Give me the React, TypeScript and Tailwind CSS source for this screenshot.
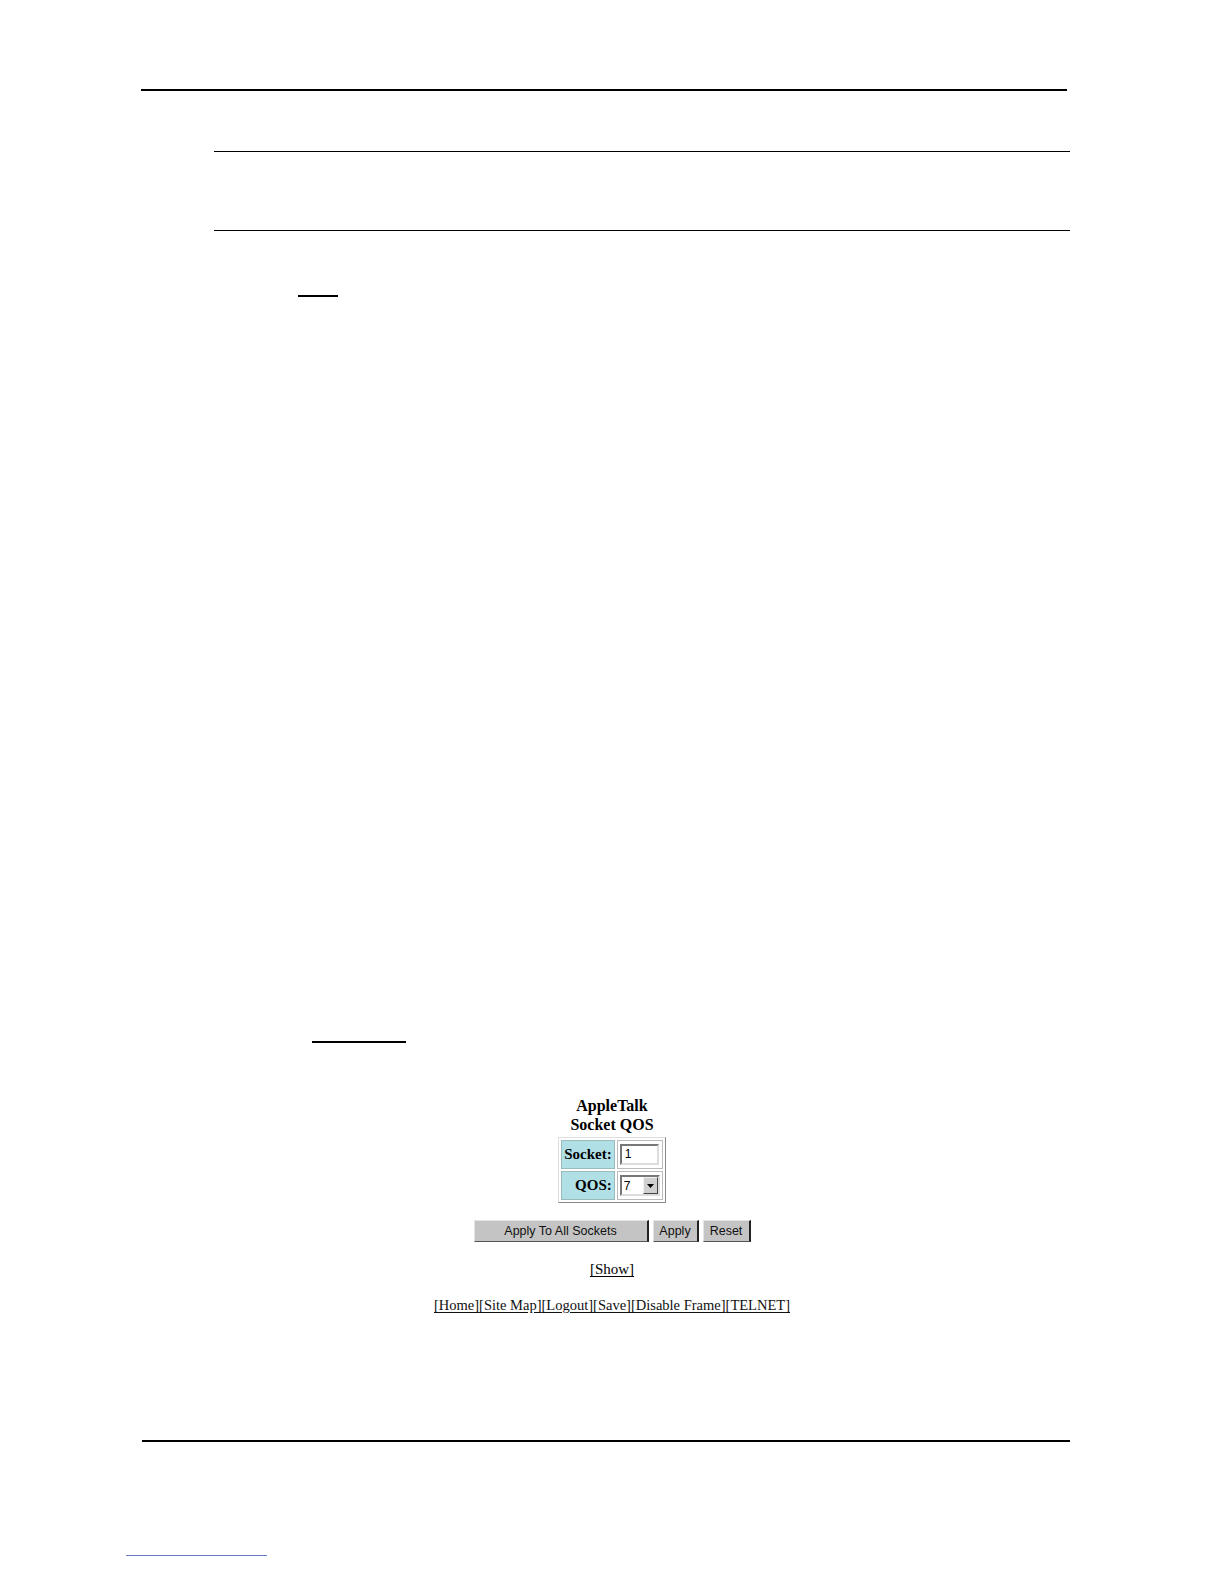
import React from 'react';

const serif = { fontFamily: '"Liberation Serif", "Times New Roman", serif' };

const Rule: React.FC<{ className: string }> = ({ className }) => <div className={className} />;

const FormButton: React.FC<{ label: string; className?: string }> = ({ label, className = '' }) => (
    <button
        type="button"
        className={`h-[22px] bg-[#c4c4c4] border-t border-l border-t-[#e4e4e4] border-l-[#e4e4e4] border-r-2 border-b border-r-[#222] border-b-[#555] text-[12.5px] text-[#111] leading-none ${className}`}
        style={{ fontFamily: '"Liberation Sans", Arial, sans-serif' }}
    >
        {label}
    </button>
);

const SocketQosForm: React.FC = () => (
    <div className="flex flex-col items-center" style={serif}>
        <div className="text-center font-bold text-[16px] leading-[19px] text-black">
            <div>AppleTalk</div>
            <div>Socket QOS</div>
        </div>
        <table className="mt-[3px] border-separate border-spacing-[2px] border border-t-[#ddd] border-l-[#ddd] border-r-[#888] border-b-[#888] border-[#aaa]">
            <tbody>
                <tr>
                    <td className="bg-[#b0e0e6] border border-[#9bb] h-[29px] px-[2px] text-right font-bold text-[15px]">Socket:</td>
                    <td className="border border-[#bbb] px-[2px]">
                        <div className="w-[39px] h-[21px] border-2 border-t-[#777] border-l-[#777] border-r-[#ddd] border-b-[#ddd] bg-white text-[12px] pl-[3px] leading-[17px]" style={{ fontFamily: '"Liberation Sans", Arial, sans-serif' }}>
                            1
                        </div>
                    </td>
                </tr>
                <tr>
                    <td className="bg-[#b0e0e6] border border-[#9bb] h-[29px] px-[2px] text-right font-bold text-[15px]">QOS:</td>
                    <td className="border border-[#bbb] px-[2px]">
                        <div className="w-[40px] h-[21px] border-2 border-t-[#777] border-l-[#777] border-r-[#ddd] border-b-[#ddd] bg-white flex items-center justify-between" style={{ fontFamily: '"Liberation Sans", Arial, sans-serif' }}>
                            <span className="text-[12px] pl-[2px] leading-none">7</span>
                            <span className="w-[15px] h-[17px] bg-[#d0d0d0] border border-t-[#f0f0f0] border-l-[#f0f0f0] border-r-[#444] border-b-[#444] flex items-center justify-center">
                                <svg width="7" height="4" viewBox="0 0 7 4"><path d="M0 0h7L3.5 4z" fill="#000" /></svg>
                            </span>
                        </div>
                    </td>
                </tr>
            </tbody>
        </table>
        <div className="mt-[17px] flex gap-[4px]">
            <FormButton label="Apply To All Sockets" className="w-[175px]" />
            <FormButton label="Apply" className="w-[46px]" />
            <FormButton label="Reset" className="w-[48px]" />
        </div>
        <a className="mt-[18px] text-[15px] leading-[18px] text-black underline underline-offset-2">[Show]</a>
        <div className="mt-[18px] text-[14.5px] leading-[18px] text-[#111]">
            <a className="underline underline-offset-2">[Home]</a>
            <a className="underline underline-offset-2">[Site Map]</a>
            <a className="underline underline-offset-2">[Logout]</a>
            <a className="underline underline-offset-2">[Save]</a>
            <a className="underline underline-offset-2">[Disable Frame]</a>
            <a className="underline underline-offset-2">[TELNET]</a>
        </div>
    </div>
);

export default function App() {
    return (
        <div className="w-[1224px] h-[1584px] bg-white overflow-hidden">
            <div className="pt-[89px]">
                <Rule className="ml-[141px] w-[926px] h-[2px] bg-black" />
                <Rule className="mt-[60px] ml-[214px] w-[856px] h-px bg-black" />
                <Rule className="mt-[78px] ml-[214px] w-[856px] h-px bg-black" />
                <Rule className="mt-[64px] ml-[298px] w-[40px] h-[2px] bg-black" />
                <Rule className="mt-[744px] ml-[312px] w-[94px] h-[2px] bg-black" />
                <div className="mt-[53px]">
                    <SocketQosForm />
                </div>
                <Rule className="mt-[126px] ml-[142px] w-[928px] h-[2px] bg-black" />
                <Rule className="mt-[113px] ml-[126px] w-[141px] h-px bg-[#6677cc]" />
            </div>
        </div>
    );
}
